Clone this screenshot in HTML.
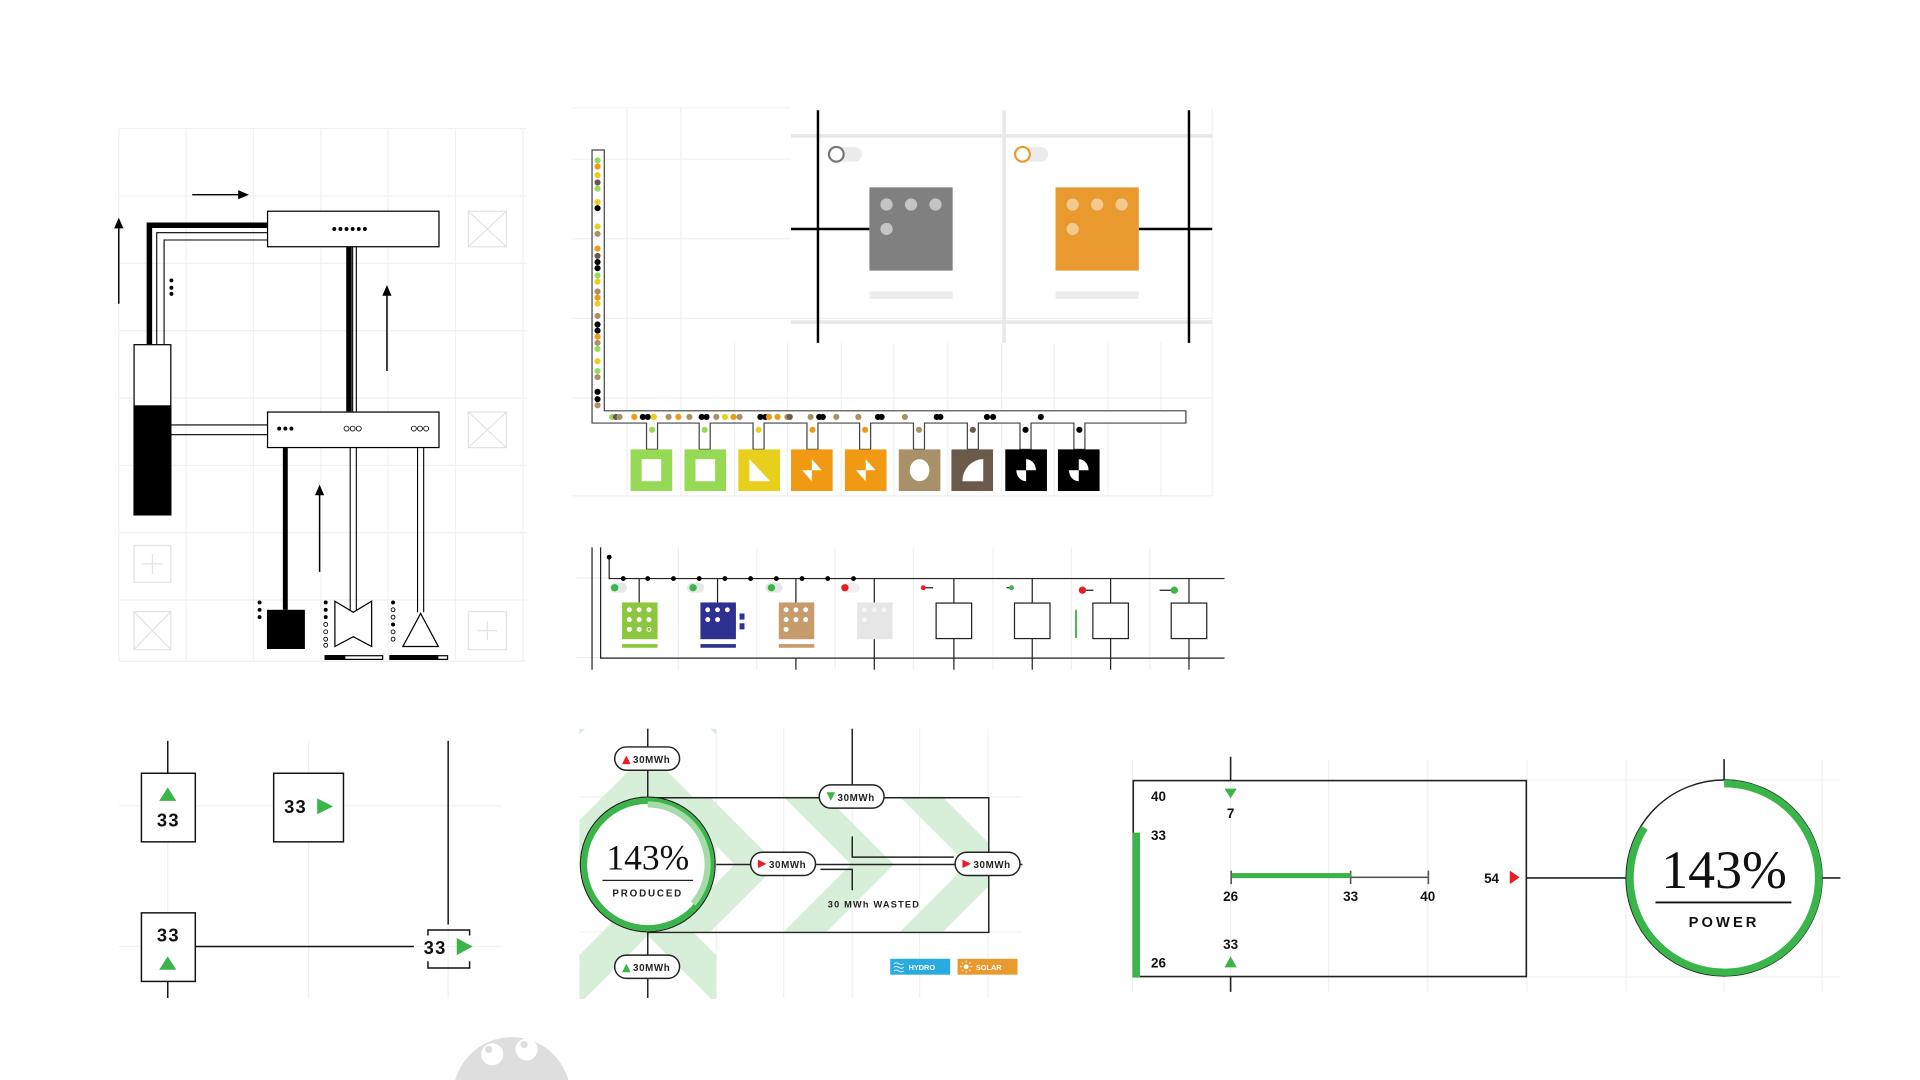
<!DOCTYPE html>
<html><head><meta charset="utf-8"><style>
html,body{margin:0;padding:0;background:#fff;width:1920px;height:1080px;overflow:hidden}
svg{display:block;overflow:hidden}
text{font-family:"Liberation Sans",sans-serif}
</style></head><body>
<svg width="1920" height="1080" viewBox="0 0 1568 882" xmlns="http://www.w3.org/2000/svg">
<defs>
<clipPath id="cc"><rect x="473" y="595" width="112" height="221"/><rect x="585" y="651" width="222" height="110"/></clipPath>
</defs>
<g stroke="#f0f0f0" stroke-width="1" fill="none">
<path d="M97 105V540M152 105V540M207 105V540M262 105V540M317 105V540M372 105V540M427 105V540M97 105H430M97 160H430M97 215H430M97 270H430M97 325H430M97 380H430M97 435H430M97 490H430M97 540H430"/>
<path d="M467 88H646M467 130H646M467 195H646M467 260H990M467 325H990M467 405H990M512 88V405M556 88V405M600 280V405M643 280V405M687 280V405M730 280V405M774 280V405M818 280V405M861 280V405M905 280V405M948 280V405M990 88V405"/>
<path d="M554 447V547M618 447V547M682 447V547M746 447V547M811 447V547M875 447V547M939 447V547M470 472H1000M470 537H1000"/>
<path d="M137 605V815M252 605V815M366 605V815M97 658H410M97 773H410"/>
<path d="M585 595V815M640 595V815M696 595V815M751 595V815M807 595V815M473 651H835M473 761H835"/>
<path d="M925 620V810M1005 620V810M1085 620V810M1166 620V810M1247 620V810M1328 620V810M1408 620V810M1488 620V810M925 637H1503M925 798H1503"/>
</g>
<g stroke="#e8e8e8" stroke-width="3"><path d="M646 111H990M646 263H990M820 90V280"/></g>

<!-- ===== Panel 1 ===== -->
<g stroke="#000" fill="none">
<path d="M157 159H197" stroke-width="1.2"/><path d="M195 156L202 159L195 162Z" fill="#000"/>
<path d="M97 248V184" stroke-width="1.2"/><path d="M94 186L97 179L100 186Z" fill="#000"/>
<path d="M316 303V239" stroke-width="1.2"/><path d="M313 241L316 234L319 241Z" fill="#000"/>
<path d="M261 467V402" stroke-width="1.2"/><path d="M258 404L261 397L264 404Z" fill="#000"/>
<path d="M122 281V184H218" stroke-width="4.5"/>
<path d="M128 281V190H218M134 281V196H218" stroke-width="0.9"/>
<path d="M285 201V336" stroke-width="4.5"/>
<path d="M288 201V336M291 201V336" stroke-width="0.9"/>
<path d="M139 347H218M139 355H218" stroke-width="0.9"/>
<path d="M233 365V498" stroke-width="4"/>
<path d="M286 365V500M291 365V500M341 365V500M346 365V500" stroke-width="0.9"/>
<rect x="218.5" y="172.5" width="140" height="29" fill="#fff" stroke-width="1"/>
<rect x="218.5" y="336.5" width="140" height="29" fill="#fff" stroke-width="1"/>
<rect x="109.5" y="281.5" width="30" height="139" fill="#fff" stroke-width="1"/>
</g>
<rect x="109" y="331" width="31" height="90" fill="#000"/>
<rect x="218" y="498" width="31" height="32" fill="#000"/>
<path d="M273.5 491L288.5 500L303.5 491V528L288.5 520L273.5 528Z" fill="#fff" stroke="#000" stroke-width="1"/>
<path d="M343.5 501L358 528H329Z" fill="#fff" stroke="#000" stroke-width="1"/>
<rect x="265.5" y="535.5" width="47" height="3" fill="#fff" stroke="#000" stroke-width="1"/><rect x="265" y="535" width="17" height="4" fill="#000"/>
<rect x="318.5" y="535.5" width="47" height="3" fill="#fff" stroke="#000" stroke-width="1"/><rect x="318" y="535" width="40" height="4" fill="#000"/>
<g fill="#000">
<circle cx="273" cy="187" r="1.6"/><circle cx="278" cy="187" r="1.6"/><circle cx="283" cy="187" r="1.6"/><circle cx="288" cy="187" r="1.6"/><circle cx="293" cy="187" r="1.6"/><circle cx="298" cy="187" r="1.6"/>
<circle cx="140" cy="229" r="1.6"/><circle cx="140" cy="235" r="1.6"/><circle cx="140" cy="240" r="1.6"/>
<circle cx="228" cy="350" r="1.6"/><circle cx="233" cy="350" r="1.6"/><circle cx="238" cy="350" r="1.6"/>
<circle cx="212" cy="492" r="1.6"/><circle cx="212" cy="498" r="1.6"/><circle cx="212" cy="504" r="1.6"/>
<circle cx="266" cy="492" r="1.6"/><circle cx="266" cy="498" r="1.6"/><circle cx="266" cy="504" r="1.6"/>
<circle cx="321" cy="492" r="1.6"/><circle cx="321" cy="510" r="1.6"/>
</g>
<g fill="#fff" stroke="#000" stroke-width="0.7">
<circle cx="283" cy="350" r="2"/><circle cx="288" cy="350" r="2"/><circle cx="293" cy="350" r="2"/>
<circle cx="338" cy="350" r="2"/><circle cx="343" cy="350" r="2"/><circle cx="348" cy="350" r="2"/>
<circle cx="266" cy="510" r="1.6"/><circle cx="266" cy="516" r="1.6"/><circle cx="266" cy="522" r="1.6"/><circle cx="266" cy="527" r="1.6"/>
<circle cx="321" cy="498" r="1.6"/><circle cx="321" cy="504" r="1.6"/><circle cx="321" cy="516" r="1.6"/><circle cx="321" cy="522" r="1.6"/>
</g>
<g stroke="#e3e3e3" fill="none" stroke-width="1">
<rect x="382.5" y="172.5" width="31" height="29"/><path d="M382 172L414 202M414 172L382 202"/>
<rect x="382.5" y="336.5" width="31" height="29"/><path d="M382 336L414 366M414 336L382 366"/>
<rect x="109.5" y="499.5" width="30" height="31"/><path d="M109 499L140 531M140 499L109 531"/>
<rect x="109.5" y="445.5" width="30" height="30"/><path d="M124.5 452V469M116 460.5H133"/>
<rect x="382.5" y="499.5" width="31" height="31"/><path d="M398 507V523M390 515H406"/>
</g>

<!-- ===== Panel 2 ===== -->
<path d="M668 90V280M971 90V280M646 187H710M930 187H990" stroke="#000" stroke-width="2"/>
<rect x="683" y="120" width="21" height="12" rx="6" fill="#ebebeb"/><circle cx="683" cy="126" r="6" fill="#fff" stroke="#777" stroke-width="1.8"/>
<rect x="835" y="120" width="21" height="12" rx="6" fill="#ebebeb"/><circle cx="835" cy="126" r="6" fill="#fff" stroke="#e89a2e" stroke-width="1.8"/>
<rect x="710" y="153" width="68" height="68" fill="#808080"/>
<g fill="#c4c4c4"><circle cx="724" cy="167" r="5"/><circle cx="744" cy="167" r="5"/><circle cx="764" cy="167" r="5"/><circle cx="724" cy="187" r="5"/></g>
<rect x="710" y="238" width="68" height="6" fill="#ececec"/>
<rect x="862" y="153" width="68" height="68" fill="#e89a2e"/>
<g fill="#f2c98f"><circle cx="876" cy="167" r="5"/><circle cx="896" cy="167" r="5"/><circle cx="916" cy="167" r="5"/><circle cx="876" cy="187" r="5"/></g>
<rect x="862" y="238" width="68" height="6" fill="#ececec"/>
<path d="M483.5 122.5H493.5V335.5H968.5V345.5H886V367H877V345.5H842V367H833V345.5H799V367H790V345.5H755V367H746V345.5H711V367H702V345.5H668V367H659V345.5H624V367H615V345.5H580V367H571V345.5H537V367H528V345.5H483.5Z" fill="#fff" stroke="#444" stroke-width="1"/>
<g>
<circle cx="488" cy="131" r="2.5" fill="#96d955"/><circle cx="488" cy="136" r="2.5" fill="#ef9a12"/><circle cx="488" cy="143" r="2.5" fill="#e8cf1c"/><circle cx="488" cy="149" r="2.5" fill="#6b5a4a"/><circle cx="488" cy="154" r="2.5" fill="#96d955"/><circle cx="488" cy="165" r="2.5" fill="#e8cf1c"/><circle cx="488" cy="170" r="2.5" fill="#000"/><circle cx="488" cy="185" r="2.5" fill="#e8cf1c"/><circle cx="488" cy="191" r="2.5" fill="#a89068"/><circle cx="488" cy="203" r="2.5" fill="#ef9a12"/><circle cx="488" cy="209" r="2.5" fill="#6b5a4a"/><circle cx="488" cy="214" r="2.5" fill="#000"/><circle cx="488" cy="219" r="2.5" fill="#000"/><circle cx="488" cy="225" r="2.5" fill="#96d955"/><circle cx="488" cy="230" r="2.5" fill="#e8cf1c"/><circle cx="488" cy="238" r="2.5" fill="#a89068"/><circle cx="488" cy="243" r="2.5" fill="#ef9a12"/><circle cx="488" cy="248" r="2.5" fill="#e8cf1c"/><circle cx="488" cy="258" r="2.5" fill="#a89068"/><circle cx="488" cy="265" r="2.5" fill="#000"/><circle cx="488" cy="270" r="2.5" fill="#000"/><circle cx="488" cy="275" r="2.5" fill="#ef9a12"/><circle cx="488" cy="280" r="2.5" fill="#a89068"/><circle cx="488" cy="285" r="2.5" fill="#96d955"/><circle cx="488" cy="295" r="2.5" fill="#e8cf1c"/><circle cx="488" cy="303" r="2.5" fill="#96d955"/><circle cx="488" cy="308" r="2.5" fill="#a89068"/><circle cx="488" cy="320" r="2.5" fill="#000"/><circle cx="488" cy="326" r="2.5" fill="#000"/><circle cx="488" cy="331" r="2.5" fill="#a89068"/>
<circle cx="500" cy="340.5" r="2.5" fill="#96d955"/><circle cx="503" cy="340.5" r="2.5" fill="#6b5a4a"/><circle cx="506" cy="340.5" r="2.5" fill="#a89068"/><circle cx="518" cy="340.5" r="2.5" fill="#ef9a12"/><circle cx="525" cy="340.5" r="2.5" fill="#000"/><circle cx="529" cy="340.5" r="2.5" fill="#000"/><circle cx="534" cy="340.5" r="2.5" fill="#e8cf1c"/><circle cx="546" cy="340.5" r="2.5" fill="#a89068"/><circle cx="554" cy="340.5" r="2.5" fill="#ef9a12"/><circle cx="563" cy="340.5" r="2.5" fill="#a89068"/><circle cx="573" cy="340.5" r="2.5" fill="#000"/><circle cx="577" cy="340.5" r="2.5" fill="#000"/><circle cx="585" cy="340.5" r="2.5" fill="#a89068"/><circle cx="592" cy="340.5" r="2.5" fill="#e8cf1c"/><circle cx="599" cy="340.5" r="2.5" fill="#ef9a12"/><circle cx="604" cy="340.5" r="2.5" fill="#a89068"/><circle cx="621" cy="340.5" r="2.5" fill="#000"/><circle cx="625" cy="340.5" r="2.5" fill="#000"/><circle cx="628" cy="340.5" r="2.5" fill="#ef9a12"/><circle cx="635" cy="340.5" r="2.5" fill="#ef9a12"/><circle cx="643" cy="340.5" r="2.5" fill="#a89068"/><circle cx="645" cy="340.5" r="2.5" fill="#6b5a4a"/><circle cx="662" cy="340.5" r="2.5" fill="#a89068"/><circle cx="669" cy="340.5" r="2.5" fill="#000"/><circle cx="672" cy="340.5" r="2.5" fill="#000"/><circle cx="683" cy="340.5" r="2.5" fill="#a89068"/><circle cx="701" cy="340.5" r="2.5" fill="#a89068"/><circle cx="717" cy="340.5" r="2.5" fill="#000"/><circle cx="720" cy="340.5" r="2.5" fill="#000"/><circle cx="739" cy="340.5" r="2.5" fill="#a89068"/><circle cx="765" cy="340.5" r="2.5" fill="#000"/><circle cx="768" cy="340.5" r="2.5" fill="#000"/><circle cx="806" cy="340.5" r="2.5" fill="#000"/><circle cx="811" cy="340.5" r="2.5" fill="#000"/><circle cx="850" cy="340.5" r="2.5" fill="#000"/>
<circle cx="532.5" cy="351" r="2.5" fill="#96d955"/><circle cx="575.5" cy="351" r="2.5" fill="#96d955"/><circle cx="619.5" cy="351" r="2.5" fill="#e8cf1c"/><circle cx="663.5" cy="351" r="2.5" fill="#ef9a12"/><circle cx="706.5" cy="351" r="2.5" fill="#ef9a12"/><circle cx="750.5" cy="351" r="2.5" fill="#a89068"/><circle cx="794.5" cy="351" r="2.5" fill="#6b5a4a"/><circle cx="837.5" cy="351" r="2.5" fill="#000"/><circle cx="881.5" cy="351" r="2.5" fill="#000"/>
</g>
<rect x="515" y="367" width="34" height="34" fill="#96d955"/><rect x="524" y="375" width="16" height="18" fill="#fff"/>
<rect x="559" y="367" width="34" height="34" fill="#96d955"/><rect x="568" y="375" width="16" height="18" fill="#fff"/>
<rect x="603" y="367" width="34" height="34" fill="#e8cf1c"/><path d="M612 375V393H629Z" fill="#fff"/>
<rect x="646" y="367" width="34" height="34" fill="#ef9a12"/><path d="M663 375V384H671ZM663 393V384H655Z" fill="#fff"/>
<rect x="690" y="367" width="34" height="34" fill="#ef9a12"/><path d="M707 375V384H715ZM707 393V384H699Z" fill="#fff"/>
<rect x="734" y="367" width="34" height="34" fill="#a89068"/><ellipse cx="751" cy="384" rx="8" ry="9" fill="#fff"/>
<rect x="777" y="367" width="34" height="34" fill="#6b5a4a"/><path d="M803 375V393H786A17 18 0 0 1 803 375Z" fill="#fff"/>
<rect x="821" y="367" width="34" height="34" fill="#000"/><path d="M838 375A8 9 0 0 1 846 384H838ZM838 393A8 9 0 0 1 830 384H838Z" fill="#fff"/>
<rect x="864" y="367" width="34" height="34" fill="#000"/><path d="M881 375A8 9 0 0 1 889 384H881ZM881 393A8 9 0 0 1 873 384H881Z" fill="#fff"/>

<!-- ===== Panel 3 ===== -->
<g stroke="#222" stroke-width="1" fill="none">
<path d="M483.5 447V547M490.5 447V537.5H1000M497.5 455V472.5H1000"/>
<path d="M650 537V547M714 472V547M779 472V547M843 472V547M907 472V547M971 472V547M522 472V492M586 472V492M650 472V492"/>
</g>
<g fill="#000"><circle cx="497.5" cy="455" r="2"/><circle cx="509" cy="472.5" r="2"/><circle cx="529" cy="472.5" r="2"/><circle cx="550" cy="472.5" r="2"/><circle cx="571" cy="472.5" r="2"/><circle cx="592" cy="472.5" r="2"/><circle cx="613" cy="472.5" r="2"/><circle cx="634" cy="472.5" r="2"/><circle cx="655" cy="472.5" r="2"/><circle cx="676" cy="472.5" r="2"/><circle cx="697" cy="472.5" r="2"/></g>
<rect x="498" y="476" width="14" height="8" rx="4" fill="#e6e6e6"/><circle cx="502" cy="480" r="3" fill="#39b54a"/>
<rect x="561" y="476" width="14" height="8" rx="4" fill="#e6e6e6"/><circle cx="566" cy="480" r="3" fill="#39b54a"/>
<rect x="625" y="476" width="14" height="8" rx="4" fill="#e6e6e6"/><circle cx="630" cy="480" r="3" fill="#39b54a"/>
<rect x="688" y="476" width="14" height="8" rx="4" fill="#f0f0f0"/><circle cx="690" cy="480" r="3" fill="#ed1c24"/>
<path d="M754 480H762M822 480H828M884 482H893M947 482H957" stroke="#222" stroke-width="1"/>
<circle cx="754" cy="480" r="2" fill="#ed1c24"/><circle cx="826" cy="480" r="2" fill="#39b54a"/><circle cx="884" cy="482" r="3" fill="#ed1c24"/><circle cx="959" cy="482" r="3" fill="#39b54a"/>
<rect x="508" y="492" width="29" height="30" fill="#8dc63f"/>
<g fill="#fff"><circle cx="514" cy="498" r="2"/><circle cx="522" cy="498" r="2"/><circle cx="530" cy="498" r="2"/><circle cx="514" cy="506" r="2"/><circle cx="522" cy="506" r="2"/><circle cx="530" cy="506" r="2"/><circle cx="514" cy="514" r="2"/><circle cx="522" cy="514" r="2"/></g><circle cx="530" cy="514" r="1.6" fill="none" stroke="#fff" stroke-width="0.8"/>
<rect x="508" y="526" width="29" height="3" fill="#8dc63f"/>
<rect x="572" y="492" width="29" height="30" fill="#2e3192"/>
<g fill="#fff"><circle cx="578" cy="498" r="2"/><circle cx="586" cy="498" r="2"/><circle cx="594" cy="498" r="2"/><circle cx="578" cy="506" r="2"/><circle cx="586" cy="506" r="2"/></g>
<rect x="604" y="501" width="4" height="5" fill="#2e3192"/><rect x="604" y="509" width="4" height="5" fill="#2e3192"/>
<rect x="572" y="526" width="29" height="3" fill="#2e3192"/>
<rect x="636" y="492" width="29" height="30" fill="#c69c6d"/>
<g fill="#fff"><circle cx="642" cy="498" r="2"/><circle cx="650" cy="498" r="2"/><circle cx="658" cy="498" r="2"/><circle cx="642" cy="506" r="2"/><circle cx="650" cy="506" r="2"/><circle cx="658" cy="506" r="2"/><circle cx="642" cy="514" r="2"/></g>
<rect x="636" y="526" width="29" height="3" fill="#c69c6d"/>
<rect x="700" y="492" width="29" height="30" fill="#e6e6e6"/>
<g fill="#f6f6f6"><circle cx="706" cy="498" r="2"/><circle cx="714" cy="498" r="2"/><circle cx="722" cy="498" r="2"/><circle cx="706" cy="506" r="2"/></g>
<g fill="#fff" stroke="#222" stroke-width="1"><rect x="764.5" y="492.5" width="29" height="29"/><rect x="828.5" y="492.5" width="29" height="29"/><rect x="892.5" y="492.5" width="29" height="29"/><rect x="956.5" y="492.5" width="29" height="29"/></g>
<rect x="878" y="498" width="1.5" height="23" fill="#39b54a"/>

<!-- ===== Panel 4 ===== -->
<g stroke="#111" stroke-width="1.2" fill="#fff">
<path d="M137 605V631M137 802V815M366 605V755M160 773H338" fill="none"/>
<rect x="115.5" y="631.5" width="44" height="56"/>
<rect x="223.5" y="631.5" width="57" height="56"/>
<rect x="115.5" y="745.5" width="44" height="56"/>
<path d="M349.5 764V759.5H383.5V764M349.5 785V790.5H383.5V785" fill="none"/>
</g>
<g fill="#39b54a"><path d="M130 654L137 643L144 654Z"/><path d="M259 652L272 658.5L259 665Z"/><path d="M130 792L137 781L144 792Z"/><path d="M373 766L386 773L373 780Z"/></g>
<g font-size="15" font-weight="bold" fill="#111" letter-spacing="1"><text x="137.5" y="675" text-anchor="middle">33</text><text x="232" y="664">33</text><text x="137.5" y="769" text-anchor="middle">33</text><text x="346" y="779">33</text></g>

<!-- ===== Panel 5 ===== -->
<g clip-path="url(#cc)" fill="#d7eed9">
<path d="M473 560L529 504L585 560V600L529 544L473 600Z"/>
<path d="M473 670L529 614L585 670V710L529 654L473 710Z"/>
<path d="M473 780L529 724L585 780V820L529 764L473 820Z"/>
<path d="M473 890L529 834L585 890V930L529 874L473 930Z"/>
<path d="M545 651H580L635 706L580 761H545L600 706Z"/>
<path d="M640 651H675L730 706L675 761H640L695 706Z"/>
<path d="M735 651H770L825 706L770 761H735L790 706Z"/>
</g>
<g stroke="#222" stroke-width="1.2" fill="none">
<path d="M529 595V815M696 595V651M529 651.5H807.5V761.5H529M585 706H807M807 706H835M696 683V700H779M670 710H696V727M670 706H779"/>
</g>
<circle cx="529" cy="706" r="55" fill="#fff" stroke="#222" stroke-width="1"/>
<circle cx="529" cy="706" r="52" fill="none" stroke="#39b54a" stroke-width="5"/>
<path d="M529 657A49 49 0 0 1 566 738" fill="none" stroke="#a5dba9" stroke-width="5"/>
<text x="529" y="710" text-anchor="middle" font-size="29" fill="#111" style="font-family:'Liberation Serif',serif">143%</text>
<path d="M492 719H566" stroke="#222" stroke-width="1"/>
<text x="529" y="732" text-anchor="middle" font-size="8" font-weight="bold" letter-spacing="1.5" fill="#222">PRODUCED</text>
<g fill="#fff" stroke="#222" stroke-width="1.2">
<rect x="502" y="610" width="53" height="19" rx="9.5"/><rect x="502" y="780" width="53" height="19" rx="9.5"/>
<rect x="669" y="641" width="53" height="19" rx="9.5"/><rect x="613" y="696" width="53" height="19" rx="9.5"/><rect x="780" y="696" width="53" height="19" rx="9.5"/>
</g>
<path d="M508 624L511.5 617L515 624Z" fill="#ed1c24"/><path d="M508 794L511.5 787L515 794Z" fill="#39b54a"/>
<path d="M675 647L678.5 654L682 647Z" fill="#39b54a"/><path d="M619 702L626 705.5L619 709Z" fill="#ed1c24"/><path d="M786 702L793 705.5L786 709Z" fill="#ed1c24"/>
<g font-size="8" font-weight="bold" fill="#222" letter-spacing="0.5"><text x="517" y="623">30MWh</text><text x="517" y="793">30MWh</text><text x="684" y="654">30MWh</text><text x="628" y="709">30MWh</text><text x="795" y="709">30MWh</text>
<text x="676" y="741" font-size="7.5" letter-spacing="1">30 MWh WASTED</text></g>
<rect x="727" y="783" width="49" height="13" fill="#29abe2"/><text x="742" y="792" font-size="6" font-weight="bold" fill="#fff">HYDRO</text>
<path d="M730 787q2-1.5 4 0t4 0M730 790q2-1.5 4 0t4 0M730 793q2-1.5 4 0t4 0" stroke="#fff" stroke-width="0.7" fill="none"/>
<rect x="782" y="783" width="49" height="13" fill="#e89a2e"/><text x="797" y="792" font-size="6" font-weight="bold" fill="#fff">SOLAR</text>
<circle cx="789" cy="789.5" r="2" fill="#fff"/><path d="M789 784.5v1.5M789 793v1.5M784 789.5h1.5M792.5 789.5h1.5M785.5 786l1 1M791.5 792l1 1M785.5 793l1-1M791.5 787l1-1" stroke="#fff" stroke-width="0.7"/>

<!-- ===== Panel 6 ===== -->
<g stroke="#222" stroke-width="1.3" fill="none">
<path d="M1005 618V637M1005 798V810M1408 620V637M1247 717H1328M1488 717H1503"/>
<rect x="925.5" y="637.5" width="321" height="160"/>
<path d="M1005.5 711V722M1103 711V722M1166.5 711V722M1005 716.5H1166" stroke="#555"/>
</g>
<rect x="925" y="680" width="6" height="118" fill="#39b54a"/>
<rect x="1006" y="713" width="97" height="4" fill="#39b54a"/>
<path d="M1000 644L1005 652L1010 644Z" fill="#39b54a"/><path d="M1000 790L1005 781L1010 790Z" fill="#39b54a"/>
<path d="M1233 711L1241 716.5L1233 722Z" fill="#ed1c24"/>
<g font-size="11" font-weight="bold" fill="#111"><text x="940" y="654">40</text><text x="1005" y="668" text-anchor="middle">7</text><text x="940" y="686">33</text>
<text x="1005" y="736" text-anchor="middle">26</text><text x="1103" y="736" text-anchor="middle">33</text><text x="1166" y="736" text-anchor="middle">40</text>
<text x="1212" y="721">54</text><text x="1005" y="775" text-anchor="middle">33</text><text x="940" y="790">26</text></g>
<circle cx="1408" cy="717" r="80" fill="#fff" stroke="#222" stroke-width="1.2"/>
<path d="M1408 640A77 77 0 1 1 1343 676" fill="none" stroke="#39b54a" stroke-width="6"/>
<text x="1408" y="725" text-anchor="middle" font-size="44" fill="#111" style="font-family:'Liberation Serif',serif">143%</text>
<path d="M1352 737H1463" stroke="#111" stroke-width="1.5"/>
<text x="1408" y="757" text-anchor="middle" font-size="12" letter-spacing="2.5" fill="#111" font-weight="bold">POWER</text>

<!-- blob -->
<circle cx="418" cy="895" r="48" fill="#dedede"/>
<circle cx="402" cy="861" r="9" fill="#fff"/><circle cx="399" cy="857" r="3" fill="#dedede"/>
<circle cx="430" cy="857" r="9" fill="#fff"/><circle cx="428" cy="853" r="3" fill="#dedede"/>
</svg>
</body></html>
